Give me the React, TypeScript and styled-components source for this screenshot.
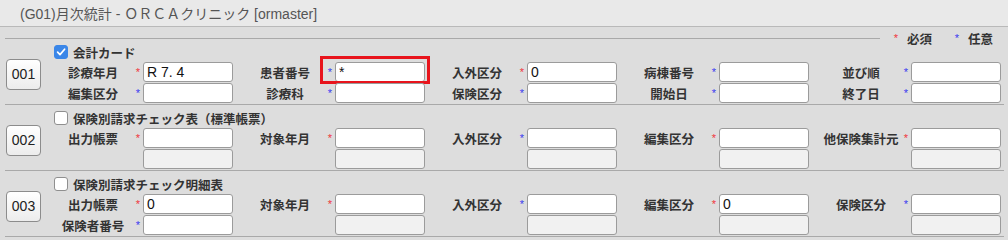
import React from "react";
import styled, { createGlobalStyle } from "styled-components";

const GlobalStyle = createGlobalStyle`
  html, body {
    margin: 0;
    padding: 0;
    background: #dddddd;
  }
  body {
    font-family: "Noto Sans CJK JP", "Liberation Sans", sans-serif;
  }
`;

const Page = styled.div`
  width: 1008px;
  height: 240px;
  overflow: hidden;
  background: #dddddd;
`;

const Header = styled.div`
  height: 26px;
  border-bottom: 1px solid #b9b9b9;
  background: #e9e9e9;
  display: flex;
  align-items: center;
  padding-left: 20px;
  font-family: "Liberation Sans", "Noto Sans CJK JP", sans-serif;
  font-size: 14px;
  color: #555;
`;

const TopRule = styled.div`
  margin: 11px 0 0 5px;
  height: 1px;
  display: flex;
  align-items: center;
`;

const Rule = styled.div`
  flex: 1;
  height: 1px;
  background: #a9a9a9;
`;

const Legend = styled.div`
  height: 1px;
  display: flex;
  align-items: center;
  padding: 0 15px 0 11px;
  line-height: 1px;
  font-size: 12.5px;
  font-weight: bold;
  color: #333;
`;

const LegendItem = styled.span`
  display: flex;
  align-items: center;
  gap: 6px;
  & + & {
    margin-left: 20px;
  }
`;

const Star = styled.span<{ $req?: boolean }>`
  width: 10px;
  text-align: center;
  font-family: "Liberation Sans", sans-serif;
  font-size: 11px;
  font-weight: normal;
  color: ${(p) => (p.$req ? "#f0363c" : "#3a3af0")};
`;

const Section = styled.section`
  margin: 0 4px 0 5px;
  padding: 6px 0 1px;
  border-bottom: 1px solid #a9a9a9;
  display: flex;
  align-items: center;
`;

const NumCol = styled.div`
  width: 36px;
  padding-left: 1px;
  box-sizing: border-box;
`;

const NumButton = styled.button`
  width: 35px;
  height: 31px;
  padding: 0;
  border: 1px solid #8c8c8c;
  border-radius: 4px;
  background: linear-gradient(#ffffff, #ececec);
  font-family: "Liberation Sans", sans-serif;
  font-size: 14px;
  color: #222;
`;

const Body = styled.div`
  display: flex;
  flex-direction: column;
`;

const CheckRow = styled.label`
  height: 14px;
  margin: 0 0 3px 13px;
  display: flex;
  align-items: center;
  gap: 5px;
  font-size: 12.5px;
  font-weight: bold;
  color: #333;
`;

const Box = styled.span<{ $on?: boolean }>`
  width: 14px;
  height: 14px;
  box-sizing: border-box;
  border-radius: 3px;
  border: 1px solid ${(p) => (p.$on ? "#3a86e8" : "#8f8f8f")};
  background: ${(p) => (p.$on ? "#3a86e8" : "#fff")};
  display: flex;
  align-items: center;
  justify-content: center;
`;

const Grid = styled.div`
  display: grid;
  grid-template-columns: repeat(5, 192px);
  row-gap: 1px;
`;

const FieldCell = styled.div`
  position: relative;
  display: grid;
  grid-template-columns: 80px 10px 90px;
  align-items: center;
  padding-left: 12px;
  height: 20px;
`;

const Label = styled.span`
  text-align: center;
  white-space: nowrap;
  font-size: 12.5px;
  font-weight: bold;
  color: #333;
`;

const Input = styled.input<{ $off?: boolean }>`
  width: 90px;
  height: 20px;
  box-sizing: border-box;
  margin: 0;
  padding: 0 3px;
  border: 1px solid #9b9b9b;
  border-radius: 3px;
  background: ${(p) => (p.$off ? "#f1f1f1" : "#fff")};
  font-family: "Liberation Sans", sans-serif;
  font-size: 14px;
  color: #111;
  outline: none;
`;

// red annotation frame drawn over the 患者番号 field
const Highlight = styled.div`
  position: absolute;
  left: 87px;
  top: -6px;
  width: 110px;
  height: 28px;
  box-sizing: border-box;
  border: 3px solid #e8141c;
  pointer-events: none;
`;

type Field = {
  label?: string;
  star?: "req" | "opt";
  value?: string;
  off?: boolean;
  mark?: boolean;
};

type Block = {
  no: string;
  title: string;
  checked: boolean;
  rows: Field[][];
};

const off: Field = { off: true };

const blocks: Block[] = [
  {
    no: "001",
    title: "会計カード",
    checked: true,
    rows: [
      [
        { label: "診療年月", star: "req", value: "R 7. 4" },
        { label: "患者番号", star: "opt", value: "*", mark: true },
        { label: "入外区分", star: "req", value: "0" },
        { label: "病棟番号", star: "opt" },
        { label: "並び順", star: "opt" },
      ],
      [
        { label: "編集区分", star: "opt" },
        { label: "診療科", star: "opt" },
        { label: "保険区分", star: "opt" },
        { label: "開始日", star: "opt" },
        { label: "終了日", star: "opt" },
      ],
    ],
  },
  {
    no: "002",
    title: "保険別請求チェック表（標準帳票）",
    checked: false,
    rows: [
      [
        { label: "出力帳票", star: "req" },
        { label: "対象年月", star: "req" },
        { label: "入外区分", star: "opt" },
        { label: "編集区分", star: "req" },
        { label: "他保険集計元", star: "req" },
      ],
      [off, off, off, off, off],
    ],
  },
  {
    no: "003",
    title: "保険別請求チェック明細表",
    checked: false,
    rows: [
      [
        { label: "出力帳票", star: "req", value: "0" },
        { label: "対象年月", star: "req" },
        { label: "入外区分", star: "opt" },
        { label: "編集区分", star: "req", value: "0" },
        { label: "保険区分", star: "opt" },
      ],
      [{ label: "保険者番号", star: "opt" }, off, off, off, off],
    ],
  },
];

const Check = ({ on }: { on: boolean }) => (
  <Box $on={on}>
    {on && (
      <svg width="10" height="10" viewBox="0 0 10 10">
        <path
          d="M1.6 5.2 L4 7.6 L8.6 2.2"
          fill="none"
          stroke="#fff"
          strokeWidth="1.7"
          strokeLinecap="round"
          strokeLinejoin="round"
        />
      </svg>
    )}
  </Box>
);

export default function App() {
  return (
    <Page>
      <GlobalStyle />
      <Header>(G01)月次統計 - ＯＲＣＡクリニック [ormaster]</Header>
      <TopRule>
        <Rule />
        <Legend>
          <LegendItem>
            <Star $req>*</Star>必須
          </LegendItem>
          <LegendItem>
            <Star>*</Star>任意
          </LegendItem>
        </Legend>
      </TopRule>
      {blocks.map((b) => (
        <Section key={b.no}>
          <NumCol>
            <NumButton>{b.no}</NumButton>
          </NumCol>
          <Body>
            <CheckRow>
              <Check on={b.checked} />
              {b.title}
            </CheckRow>
            <Grid>
              {b.rows.flat().map((f, i) => (
                <FieldCell key={i}>
                  <Label>{f.label ?? ""}</Label>
                  {f.star ? <Star $req={f.star === "req"}>*</Star> : <span />}
                  <Input $off={f.off} defaultValue={f.value ?? ""} readOnly />
                  {f.mark && <Highlight />}
                </FieldCell>
              ))}
            </Grid>
          </Body>
        </Section>
      ))}
    </Page>
  );
}
